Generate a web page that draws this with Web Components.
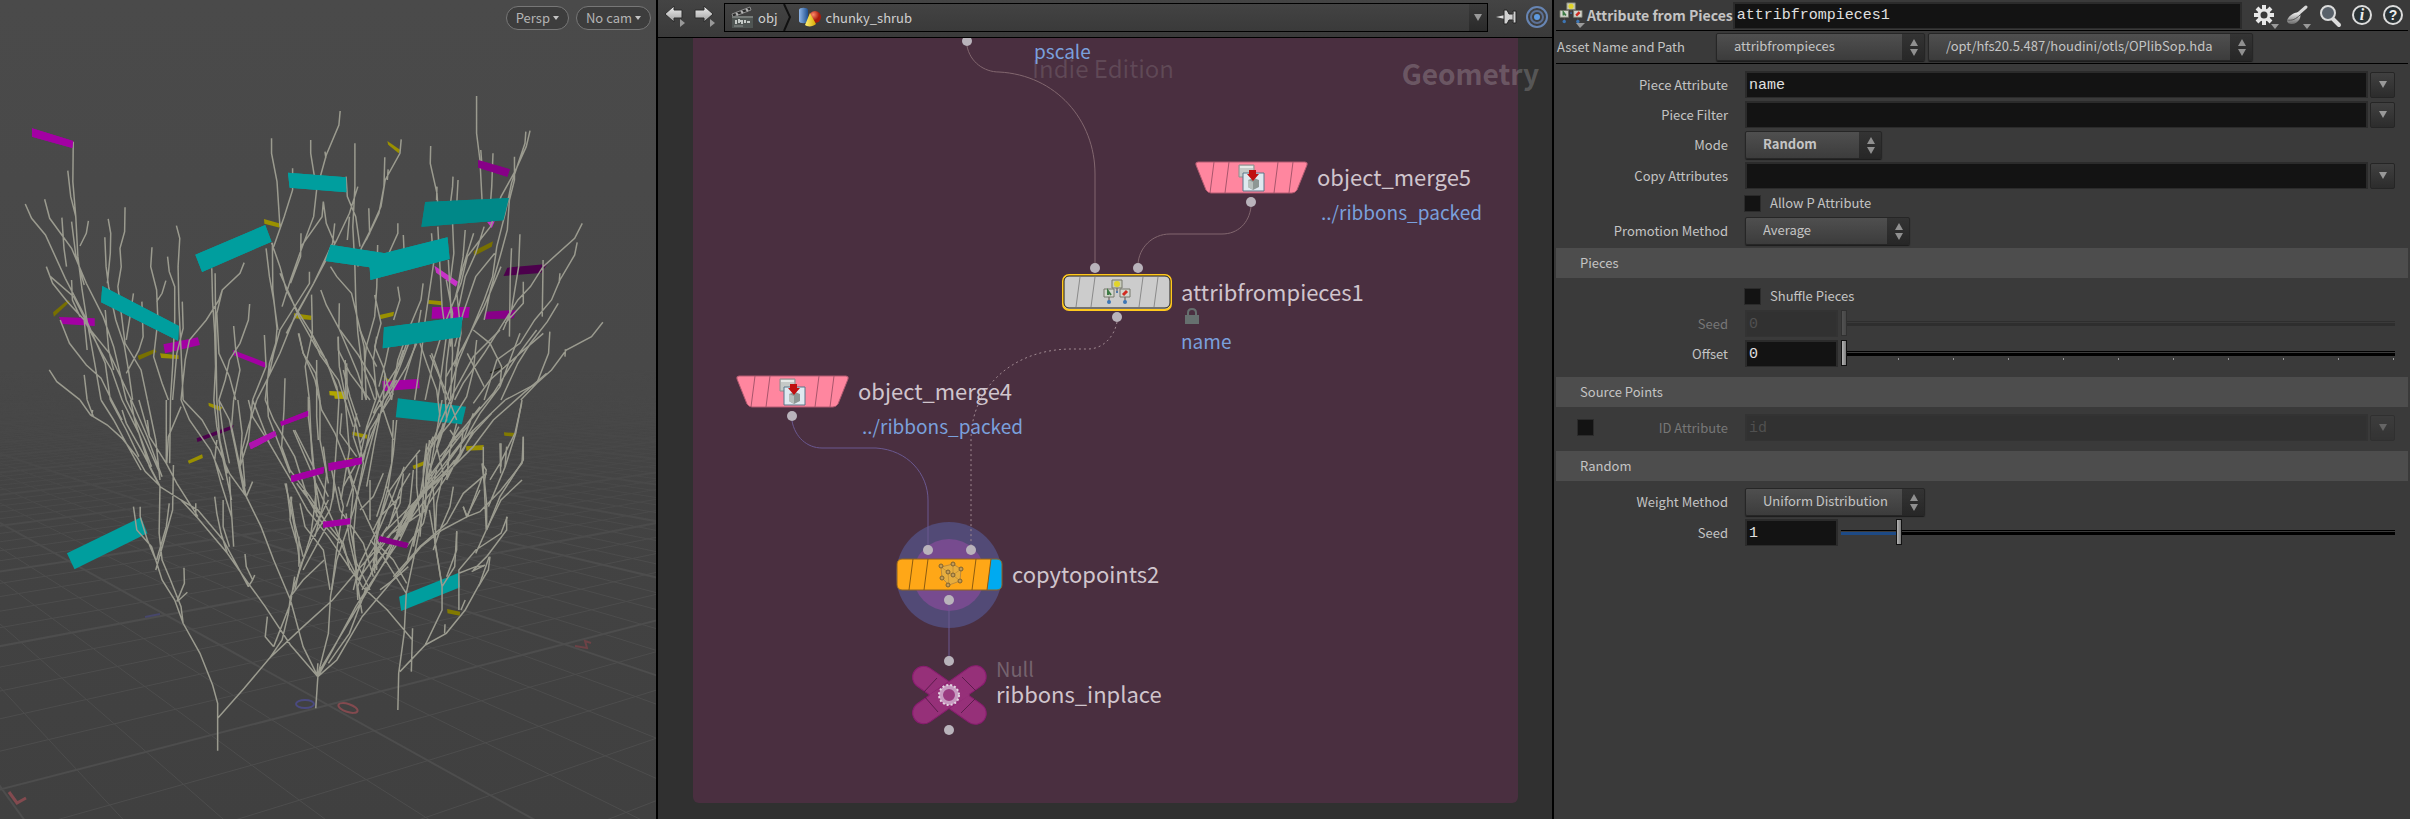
<!DOCTYPE html>
<html lang="en">
<head>
<meta charset="utf-8">
<title>chunky_shrub</title>
<style>
    html, body {
        height: 100%;
        margin: 0;
    }

    body {
        background-color: #3a3a3a;
        color: #c4c4c4;
        font-family: "Noto Sans CJK SC", "Noto Sans", sans-serif;
        font-size: 13px;
        overflow: hidden;
    }
</style>
</head>
<body>
<app-desktop>
    <scene-view slot="scene"></scene-view>
    <network-editor slot="network">
        <network-node kind="merge" name="object_merge5" note="../ribbons_packed" style="left: 537px; top: 123px"></network-node>
        <network-node kind="pieces" name="attribfrompieces1" note="name" locked style="left: 404px; top: 236px"></network-node>
        <network-node kind="merge" name="object_merge4" note="../ribbons_packed" style="left: 78px; top: 337px"></network-node>
        <network-node kind="copy" name="copytopoints2" style="left: 238px; top: 520px"></network-node>
        <network-node kind="null" name="ribbons_inplace" type="Null" style="left: 254px; top: 631px"></network-node>
    </network-editor>
    <param-pane slot="params">
        <param-group>
            <param-text label="Piece Attribute" value="name" menu></param-text>
            <param-text label="Piece Filter" value="" menu></param-text>
            <param-menu label="Mode" value="Random" width="137" bold></param-menu>
            <param-text label="Copy Attributes" value="" menu></param-text>
            <param-toggle label="Allow P Attribute"></param-toggle>
            <param-menu label="Promotion Method" value="Average" width="165"></param-menu>
        </param-group>
        <param-group heading="Pieces">
            <param-toggle label="Shuffle Pieces"></param-toggle>
            <param-slider label="Seed" value="0" disabled></param-slider>
            <param-slider label="Offset" value="0" ticks></param-slider>
        </param-group>
        <param-group heading="Source Points">
            <param-text label="ID Attribute" value="id" menu toggle disabled></param-text>
        </param-group>
        <param-group heading="Random">
            <param-menu label="Weight Method" value="Uniform Distribution" width="180"></param-menu>
            <param-slider label="Seed" value="1"></param-slider>
        </param-group>
    </param-pane>
</app-desktop>

<script>
const icons = {
    back: `<defs><linearGradient id="g" x2="0" y2="1"><stop stop-color="#f0f0f0"/><stop offset="1" stop-color="#a0a0a0"/></linearGradient></defs>
        <path d="M1 9L10 1V5H18V13H10V17Z" fill="url(#g)" stroke="#2c2c2c"/><path d="M16 14L21 18L16 22Z" fill="#999"/>`,
    forward: `<defs><linearGradient id="g" x2="0" y2="1"><stop stop-color="#f0f0f0"/><stop offset="1" stop-color="#a0a0a0"/></linearGradient></defs>
        <path d="M19 9L10 1V5H1V13H10V17Z" fill="url(#g)" stroke="#2c2c2c"/><path d="M16 14L21 18L16 22Z" fill="#999"/>`,
    clapper: `<path d="M1 8L19 1L20 4L2 11Z" fill="#2b2b2b" stroke="#8d8d8d"/><path d="M5 7L7 9M10 5L12 7M15 3L17 5" stroke="#b5b5b5" stroke-width="2"/>
        <path d="M1 10H22V22H1Z" fill="#4f5553"/><path d="M1 10H22V12H1Z" fill="#767b79"/><path d="M5 14V18M8 13V17M8 15H11V18M14 14V17M16 16H19" stroke="#c3c8c5" stroke-width="2"/><path d="M3 20H12" stroke="#8d918f"/>`,
    shapes: `<defs><linearGradient id="b"><stop stop-color="#8fb6e8"/><stop offset="1" stop-color="#20508f"/></linearGradient>
        <linearGradient id="y"><stop stop-color="#fff27a"/><stop offset="1" stop-color="#d8a800"/></linearGradient>
        <radialGradient id="r" cx=".35" cy=".3"><stop stop-color="#ff8a6a"/><stop offset="1" stop-color="#a81a0c"/></radialGradient></defs>
        <path d="M1 3C1 0 10 0 10 3V14C10 17 1 17 1 14Z" fill="url(#b)"/><circle cx="17" cy="10" r="6" fill="url(#r)"/>
        <path d="M12 6L18 17C15 20 9 20 7 18Z" fill="url(#y)"/>`,
    pin: `<path d="M0 9L9 7V11Z" fill="#ddd"/><path d="M8 2L11 2L13 6H17V3H20V15H17V12H13L11 16H8Z" fill="#d0d0d0" stroke="#222"/><path d="M17 4V14" stroke="#555"/>`,
    target: `<g fill="none" stroke="#6785b3"><circle cx="11" cy="11" r="10" stroke-width="2"/><circle cx="11" cy="11" r="6" stroke-width="2" stroke="#5c7196"/></g><circle cx="11" cy="11" r="3" fill="#5f9ae0"/>`,
    gear: `<g stroke="#e8e8e8" stroke-width="4"><path d="M11 1V6M11 16V21M1 11H6M16 11H21M4 4L7 7M15 15L18 18M4 18L7 15M15 7L18 4"/></g><circle cx="11" cy="11" r="5" fill="none" stroke="#e8e8e8" stroke-width="3"/><path d="M18 20H26L22 25Z" fill="#9a9a9a"/>`,
    brush: `<defs><linearGradient id="s" x2="0" y2="1"><stop stop-color="#f0f0f0"/><stop offset="1" stop-color="#6a6a6a"/></linearGradient></defs>
        <path d="M12 10L20 3" stroke="#d8d8d8" stroke-width="3" stroke-linecap="round"/><path d="M1 16C3 12 9 7 13 9C17 12 12 20 6 20C3 20 1 19 1 16Z" fill="url(#s)"/><path d="M1 16C6 17 10 15 14 11" fill="none" stroke="#555"/><path d="M17 20H25L21 25Z" fill="#9a9a9a"/>`,
    search: `<path d="M13 14L20 21" stroke="#ddd" stroke-width="4" stroke-linecap="round"/><circle cx="9" cy="9" r="7" fill="#59616a" stroke="#dcdcdc" stroke-width="2"/>`,
    info: `<circle cx="10" cy="10" r="9" fill="#2a3234" stroke="#ddd" stroke-width="2"/><text x="10" y="15" text-anchor="middle" font-family="Liberation Serif" font-size="16" font-weight="700" font-style="italic" fill="#eee">i</text>`,
    help: `<circle cx="10" cy="10" r="9" fill="#2a3234" stroke="#ddd" stroke-width="2"/><text x="10" y="15" text-anchor="middle" font-family="Liberation Sans" font-size="14" font-weight="700" fill="#eee">?</text>`,
    pieces: `<path d="M13 9V14M5 18V22M21 18V22" stroke="#5a4a4a"/>
        <path d="M8 1H18V9H8Z" fill="#c9ccb9" stroke="#77796c"/><circle cx="13" cy="5" r="3" fill="#e2d528"/>
        <path d="M0 10H10V18H0Z" fill="#d3d6ce" stroke="#77796c"/><path d="M4 16V12L7 16" fill="none" stroke="#3d7a44" stroke-width="2"/>
        <path d="M16 10H26V18H16Z" fill="#d3d6ce" stroke="#77796c"/><path d="M19 16L23 12" stroke="#d02a20" stroke-width="3"/>
        <circle cx="5" cy="23" r="2" fill="#3d76b5"/><circle cx="21" cy="23" r="2" fill="#3d76b5"/><circle cx="13" cy="13" r="1" fill="#3d76b5"/>`,
    merge: `<path d="M0 0H15V12H0Z" fill="#c5c9c7" stroke="#8b8f8d"/><path d="M1 1H14V3H1Z" fill="#e6e9e7"/>
        <path d="M4 8H25V26H4Z" fill="#dfe9f0" stroke="#5a7488"/><path d="M9 15L15 13L20 15V22L14 25L9 22Z" fill="#8d9794"/><path d="M9 15L14 17V25L9 22Z" fill="#b6bfbc"/>
        <path d="M10 5H17V9H20L14 16L8 9H10Z" fill="#c01010"/>`,
    points: `<path d="M2 5L14 2L22 7L21 19L10 23L3 16Z" fill="#e7ad3e" stroke="#bd8a3a"/><path d="M9 10L2 5M9 10L14 13L22 7M14 13V2M9 10L10 23M14 13L21 19" stroke="#c99437" fill="none"/>
        <g fill="#c39a55" stroke="#7d6230"><circle cx="2" cy="4" r="2"/><circle cx="14" cy="2" r="2"/><circle cx="22" cy="7" r="2"/><circle cx="9" cy="10" r="2"/><circle cx="14" cy="13" r="2"/><circle cx="3" cy="16" r="2"/><circle cx="21" cy="19" r="2"/><circle cx="9" cy="23" r="2"/></g>`
};

icons.asset = `<g transform="scale(.85)">${icons.pieces}</g><path d="M16 21H25L20 26Z" fill="#9a9a9a"/>`;

const icon = (name, width, height) =>
    `<svg width="${width}" height="${height}" viewBox="0 0 ${width} ${height}" fill="none" aria-hidden="true">${icons[name]}</svg>`;

class AppDesktop extends HTMLElement {

    constructor() {
        super();
        this.shadow = this.attachShadow({mode: 'open'});
        this.render();
    }

    render() {
        this.shadow.innerHTML =
        `
        <style>
            :host {
                background-color: #000;
                display: grid;
                gap: 2px;
                grid-template-columns: 656fr 894fr 856fr;
                height: 100vh;
            }

            ::slotted(*) {
                min-width: 0;
                overflow: hidden;
            }
        </style>
        <slot name="scene"></slot>
        <slot name="network"></slot>
        <slot name="params"></slot>
        `;
    }
}

customElements.define('app-desktop', AppDesktop);

// Upper crown of the shrub
const crown = `M60 612L75 655L108 705L155 835L200 945L250 1090L262 1200 M106 598L118 655L170 745L205 850L245 950L270 1040L300 1200
    M174 425L173 545L180 650L185 770L195 870L205 950L225 1090L240 1200 M161 512L168 590L180 650 M147 653L152 745L158 800
    M170 665L180 765L200 855 M210 663L205 700L190 738 M110 800L125 850L160 905L200 960L240 1055L265 1110L290 1200
    M120 830L175 890L215 990L260 1060L312 1200 M143 960L165 1030L205 1095L240 1135L265 1200 M117 1110L135 1145L190 1200 M200 1125L207 1200
    M249 712L252 800L258 860L275 960L295 1035L305 1110L315 1200 M257 657L263 700L262 760L255 850 M170 840L172 900L190 950
    M297 622L296 695L285 745L288 800L280 860L290 960L297 1030L335 1110L350 1200 M361 742L358 800L372 870L375 960L365 1070L385 1150L400 1200
    M398 770L402 815L415 860L415 960L410 1100L405 1200 M419 677L427 715L423 800L425 920L430 1050L435 1200 M394 842L385 880L372 905
    M433 905L435 985L420 1060L410 1200 M317 880L310 940L300 1020 M337 905L340 1010L330 1050L300 1120 M250 930L258 1050L270 1110 M200 960L207 1050
    M503 805L505 905L510 1000L512 1100L508 1200 M511 820L512 950L515 1200 M580 788L570 820L528 870L520 900L490 960L450 1020L440 1080L430 1200
    M593 912L590 960L570 1030L545 1080L535 1140L520 1200 M555 978L560 1050L570 1110L555 1200 M528 870L515 940L520 1060L545 1130L560 1200
    M645 415L645 460L658 545L665 680 M695 505L695 570L675 650L650 740 M738 420L738 460L752 570L745 650L718 740L690 840L670 920
    M808 333L805 375L775 465L752 570 M772 455L774 475 M645 728L665 800L680 870L705 930L740 1000L770 1070L800 1160L805 1200
    M632 745L640 830L650 900L660 990 M647 728L648 870L658 985L655 1030L640 1090L630 1200 M843 430L843 560L838 680L843 800L845 900L850 1000L860 1100L860 1200
    M768 605L765 650L715 740 M715 700L714 770L690 850 M768 605L775 670L795 730 M850 560L830 640L800 720L745 850L700 950L665 1060L630 1150L610 1200
    M795 670L790 730L745 850L680 1000 M953 418L950 460L915 540L905 620L880 690L858 745 M914 472L912 560L900 640L870 720 M922 508L920 540
    M876 625L878 700L858 745L850 800 M822 530L825 590L845 650L855 740 M830 650L825 720 M665 820L690 890L710 950L750 1040L775 1080L800 1170
    M762 870L775 915L805 985L830 1060L850 1120L870 1200 M740 884L742 1000L725 1100L735 1200 M735 815L735 850L665 990L650 1060L640 1120
    M710 1000L720 1060L750 1120L760 1200 M628 1005L632 1100L600 1200 M785 800L800 830L835 880L850 960L865 1040L870 1200 M803 1010L806 1100L822 1200
    M820 1080L822 1200 M806 910L805 985 M945 670L945 700L920 770 M897 735L895 860L890 950L870 1040L865 1110L890 1200 M958 705L960 760
    M1132 288L1132 400L1140 480L1145 600 M1023 438L1022 490L1038 580L1040 620 M1142 450L1145 500 M1038 560L1037 600
    M1076 530L1075 560L1070 610 M1088 540L1085 610 M1171 460L1168 560L1165 610
    M1259 392L1250 440L1225 510L1190 590L1165 680L1140 720L1110 770L1095 850L1060 960L1030 1080L1010 1200
    M1249 395L1247 430L1215 550L1200 640L1180 740L1170 830L1150 900L1120 990L1090 1080L1060 1200 M1222 470L1222 540L1210 600L1205 690L1190 760L1165 870L1150 960
    M1383 670L1365 715L1290 800L1260 860L1230 900L1190 980L1150 1060L1100 1150L1080 1200 M1371 727L1365 765L1330 840L1310 900L1270 960L1235 1030L1180 1080L1150 1200
    M1326 910L1300 965L1260 1030L1230 1090L1190 1200 M1290 780L1288 950 M1330 820L1328 850 M1235 703L1232 800L1215 930L1195 990 M1243 845L1243 910L1200 970
    M1215 745L1212 830L1210 1010 M1432 967L1405 1010L1345 1050L1310 1110L1275 1150L1237 1200 M1306 995L1303 1060L1275 1150L1200 1200 M1343 1048L1342 1070
    M1005 850L1000 900L970 990L945 1080L930 1200 M1040 680L1045 800L1050 920L1060 1010L1040 1200 M1065 780L1070 900L1075 1060L1070 1200
    M1105 690L1100 770L1085 880L1095 1000L1080 1100 M890 885L905 970L890 1040L910 1100L930 1200 M945 860L950 900L935 960 M1075 670L1078 760L1070 840
    M1025 700L1030 790L1010 960L1000 1070L985 1200 M1125 700L1100 800L1080 900 M1150 680L1130 760L1105 830L1090 920 M1190 800L1150 920L1100 1040L1060 1130
    M1175 760L1130 830L1100 940L1080 1040 M1060 840L1075 940L1070 1040 M980 1000L950 1100L930 1160 M1000 930L985 1040L960 1140 M930 1000L915 1090L900 1160
    M1110 1060L1130 1110L1150 1160 M1025 1060L1040 1110L1055 1180`;

// Stems and lower branches
const stems = `M517 1052L517 910L505 855L475 760L435 670L415 600L385 540L370 480L350 420L333 350L333 320
    M517 955L580 865L640 775L720 680L790 600L850 510L900 440L950 370L1000 280L1050 200L1100 120L1150 60L1200 0
    M435 670L430 620L405 540L385 480L378 400L380 260 M420 605L438 550L437 503 M425 600L445 577 M370 480L360 440L325 390L317 320
    M370 510L390 420L410 330L412 195 M372 480L395 380L402 310 M380 258L345 215L325 170L290 115L255 75L215 45L190 0 M220 30L218 50
    M380 258L340 160L300 70L290 30 M380 260L355 200L340 140L320 60L310 0 M380 260L430 300L470 355L540 460L590 550L630 620L690 735L755 830
    M430 300L470 330L530 420L590 560 M470 350L420 250L395 190L355 110L330 0 M465 310L465 350 M590 560L600 540L585 500L582 462 M540 460L525 400L515 340L510 290
    M545 440L530 380L530 300 M555 440L550 340L545 230 M755 830L720 740L690 600L650 480L620 380L585 290L570 200L575 100L565 0
    M585 290L545 220L520 150L480 60L435 0 M585 290L600 245 M550 350L525 250L510 180L515 120 M580 280L560 150L545 60L520 0 M570 200L590 120L600 0
    M750 925L755 830L760 800L780 700L785 590L800 480L840 330L870 180L900 40 M755 790L753 830 M755 830L790 750L845 620L880 550L950 420L1010 260L1020 120
    M755 830L800 780L860 650L920 560L1000 440L1050 390L1110 350L1140 335L1190 270L1240 190L1243 110 M780 790L830 700L860 600L870 560
    M650 740L630 710L635 650 M650 740L690 610L700 530 M640 775L670 720L685 640L690 590L720 540L770 480
    M945 930L947 820L960 700L965 580L990 430L1010 300L1030 150L1050 0 M950 815L1010 735L1050 630L1050 560L1035 440L1020 330
    M977 815L980 685 M980 720L920 630L860 560L820 460L790 360L750 250 M1010 735L1060 700L1105 630L1140 550L1162 470 M1056 700L1057 673 M1095 630L1105 600
    M1050 560L1080 500L1085 393 M1090 520L1130 500L1150 497 M1090 630L1090 510L1130 450L1190 400L1205 350 M1155 390L1150 250L1145 190
    M1155 390L1190 300L1240 240 M1155 390L1130 460 M1160 320L1200 200L1225 100L1240 0 M1190 130L1190 200 M1145 190L1155 210L1150 250
    M690 590L715 500L740 400L780 300 M710 500L710 410 M720 470L700 370L690 290 M690 350L680 250 M720 510L750 440L780 370 M600 540L605 525
    M395 190L395 0 M403 190L405 0 M430 20L400 110L396 190 M350 60L355 110 M1110 350L1140 250L1145 230 M1110 350L1100 320 M640 130L600 50L590 0
    M700 260L730 330L780 410L850 540 M700 90L740 190L780 290 M965 580L910 470L880 420 M850 600L845 500L830 420L822 340
    M240 0L270 60L300 130L335 210 M262 0L300 90L330 170 M290 0L330 100L360 200 M300 0L345 120L380 220 M312 0L350 110L385 230 M350 0L370 120L380 240
    M265 0L290 60 M207 0L222 50 M508 0L515 80L530 180L550 300 M515 0L522 120L540 220 M555 0L550 80L570 200 M520 0L530 100L545 190 M610 0L590 80L575 150L582 260
    M630 0L650 60L700 170L730 290 M600 0L640 130L700 260 M735 0L740 150L750 280 M760 0L760 120L780 250 M805 0L800 120L790 300 M820 0L830 150L810 300
    M430 0L450 60L500 150L530 240 M755 820L860 600L930 450L980 320L1040 200L1090 80 M860 570L900 480L1010 300L1080 180 M860 640L850 560L870 480L920 380
    M850 540L930 400L1000 340 M890 520L890 420L930 300L960 200`;

// Dense middle of the shrub
const thicket = `M115 10L130 70L165 150L185 240L225 310L260 400L300 520L360 650 M150 0L180 75L235 150L280 290 M235 20L235 60L270 130L330 210
    M240 0L295 75L340 150L370 240L400 330 M300 0L325 60L350 110 M350 20L340 90L350 200L320 290L300 380L250 470 M470 40L440 110L380 210L340 300L300 400L260 530
    M440 40L420 100L375 170L340 250 M375 130L370 210L345 330L320 470 M510 75L530 120L560 190L590 270 M480 40L500 100L530 180L540 260
    M570 20L560 100L555 190L560 270L510 360 M600 20L590 100L580 200L540 330L500 450 M650 30L640 120L620 200L570 280L520 340
    M720 0L640 80L580 190L540 280L500 380L480 500L420 620 M780 10L750 90L720 170L660 250L620 320L540 430L470 510L370 610L330 740
    M830 0L770 80L700 190L640 260L570 340 M860 130L790 190L700 270L640 350L560 430L490 490L420 600L340 720 M850 10L780 70L690 150L640 220
    M695 250L640 310L580 400L500 480L430 570L380 680 M720 170L725 110L690 40L640 0 M785 220L765 310L720 400L690 450 M790 320L790 390L720 500L680 600
    M670 350L670 420L680 520L680 600 M680 430L610 490L560 580L480 650L400 740 M610 530L620 560L660 480 M580 470L570 530L540 600L520 660
    M720 340L722 430 M740 350L735 410 M480 360L440 410L390 480L360 570L340 700 M500 340L490 420L490 500L480 620 M515 340L500 440L495 560
    M470 370L470 470L480 560L440 700 M430 430L420 520L380 600 M410 270L400 370L385 470L350 600L350 720 M400 270L395 400L370 500L350 560
    M260 100L262 200L290 290L310 400L290 510L280 620L290 730 M170 90L170 260L175 330 M145 200L145 260L155 340L165 450L170 560
    M75 145L72 240L65 350L90 420L150 500L200 580 M20 160L25 260L60 350L90 430 M100 300L130 370L165 450L180 540 M190 350L200 430L190 520L165 620
    M75 460L90 520L105 600L120 700 M95 500L90 570L110 640 M120 520L135 590L190 660L210 780 M170 470L160 560L150 630 M225 470L210 540L155 630L120 710L105 780
    M235 470L250 530L230 660L215 780 M370 430L340 500L300 540 M330 450L330 570 M260 400L280 480L270 590L290 700L330 780 M110 460L170 540L250 640L270 720
    M215 420L240 540L310 640L340 740 M360 650L400 690L440 760 M445 710L400 750L360 780 M550 280L530 350L550 430L530 520L525 640L545 760
    M510 400L520 480L525 600 M590 280L570 360L560 440 M640 250L610 330L560 400 M460 650L480 560L540 470L600 380L640 300 M350 600L300 700L280 780
    M590 605L590 660L560 740 M740 560L740 600L680 680L640 720 M635 725L675 705 M690 680L685 720L655 770 M245 250L240 310L290 380 M290 250L280 320L300 380
    M630 280L560 370L500 450 M660 230L600 310L540 380 M610 300L600 370L560 450 M570 300L590 330L540 400 M520 320L500 360L490 430 M450 430L420 480L390 580
    M340 600L360 560L420 500 M310 390L330 300L400 190 M300 340L350 240L410 150 M430 60L400 150L360 230 M250 120L270 200L300 290 M130 480L180 570L240 640
    M380 470L410 540L420 620 M460 420L450 520L410 610 M530 420L510 500L490 580L440 650`;

const teal = '#009e9e', violet = '#a300a3', plum = '#870087', mustard = '#9a9000';

const ribbonsTop = [
    [violet, '76,385 174,423 172,444 76,410'], [plum, '1136,480 1211,508 1205,530 1136,503'],
    [teal, '684,518 822,532 823,577 688,563'], ['#008888', '1010,606 1209,594 1196,661 1001,680'],
    [teal, '464,764 630,675 645,725 480,816'], [teal, '785,734 915,760 895,805 773,783'],
    [teal, '905,762 1063,712 1068,777 880,840 878,802'], [teal, '243,858 425,978 423,1022 240,907'],
    ['#009696', '912,982 1099,950 1093,1012 909,1045'], [violet, '140,951 225,955 225,978 148,972'],
    [violet, '388,1033 470,1012 475,1035 392,1060'], [violet, '553,1050 632,1088 630,1103 555,1066'],
    [violet, '1027,921 1116,921 1113,953 1025,956'], [plum, '1152,935 1226,930 1220,955 1150,958'],
    ['#4c004c', '1205,803 1300,792 1285,819 1196,828'], ['#c832c8', '1032,797 1088,845 1083,860 1036,818'],
    ['#c832c8', '1157,666 1175,664 1168,684'], [violet, '908,1143 995,1137 997,1165 910,1174'],
    [mustard, '920,423 951,450 947,460 922,434'], [mustard, '627,657 669,672 667,684 628,671'],
    ['#787000', '1125,753 1171,724 1168,740 1126,768'], ['#787000', '161,900 166,905 128,950 126,937'],
    [mustard, '698,940 741,947 739,960 699,955'], [mustard, '901,945 936,935 934,948 903,958'],
    [mustard, '1017,900 1050,904 1050,916 1017,911'], ['#787000', '327,1067 368,1047 372,1056 330,1080'],
    [mustard, '380,1060 424,1066 424,1077 383,1074'], ['#b0a600', '782,1173 822,1175 824,1197 795,1196 794,1187 783,1186'],
    [mustard, '910,1128 930,1143 920,1146'], ['#222218', '1163,1117 1205,1094 1205,1098 1165,1120']
];

const ribbonsBottom = [
    ['#009696', '945,-5 1107,20 1097,73 940,52'], [teal, '159,460 335,352 350,400 177,508'], [teal, '948,590 1090,518 1093,562 953,633'],
    [violet, '666,65 732,32 732,48 668,78'], ['#b012b0', '591,130 653,92 657,107 596,148'], [violet, '691,227 770,200 768,220 692,247'],
    [violet, '780,190 860,172 859,192 781,213'], [violet, '767,365 832,355 832,373 768,383'], [plum, '902,408 971,430 966,445 898,424'],
    ['#4c004c', '467,115 555,75 552,87 469,126'], [mustard, '495,8 528,22 523,33 496,18'], [mustard, '446,182 480,163 482,174 449,191'],
    [mustard, '837,95 873,104 871,116 837,105'], [mustard, '1107,139 1149,135 1147,150 1108,152'], ['#827a00', '1197,97 1225,99 1223,110 1198,107'],
    [mustard, '980,197 1010,182 1009,194 983,208'], [mustard, '815,176 840,173 830,180'], ['#827a00', '1062,627 1093,635 1092,647 1063,640']
];

const polygons = list => list.map(([fill, points]) => `<polygon fill="${fill}" points="${points}"/>`).join('');

// Ground plane point (u, v) to view coordinates
function project(u, v) {
    const w = 1 - 0.16 * u - 0.335 * v;
    return `${((328 - 326.3 * u + 106.4 * v) / w).toFixed(1)} ${((705 - 42.2 * u - 116 * v) / w).toFixed(1)}`;
}

function gridLines() {
    let minor = '';
    let major = '';
    for (let i = -60; i <= 60; i++) {
        const t = i / 5;
        const alongV = `M${project(t, -40)}L${project(t, (0.85 - 0.16 * t) / 0.335)}`;
        const alongU = `M${project(-40, t)}L${project((0.85 - 0.335 * t) / 0.16, t)}`;
        if (i % 5) {
            minor += alongV + alongU;
        } else {
            major += alongV + alongU;
        }
    }
    return {minor, major};
}

class SceneView extends HTMLElement {

    constructor() {
        super();
        this.shadow = this.attachShadow({mode: 'open'});
        this.render();
    }

    render() {
        const grid = gridLines();

        this.shadow.innerHTML =
        `
        <style>
            :host {
                background: linear-gradient(#4a4a4a, #484848 45%, #434343 60%, #404040);
                display: grid;
            }

            svg, .cameras {
                grid-area: 1 / 1;
            }

            svg {
                height: 100%;
                width: 100%;
            }

            .branches path {
                fill: none;
                stroke: #9b9b8f;
                stroke-width: 1.5px;
                vector-effect: non-scaling-stroke;
            }

            .cameras {
                align-items: center;
                align-self: start;
                display: flex;
                gap: 7px;
                justify-content: flex-end;
                padding: 6px 5px 0 0;
                z-index: 1;
            }

            button {
                align-items: center;
                background-color: #3d3d3d;
                border: 1px solid #777;
                border-radius: 12px;
                color: #b4b4b4;
                display: flex;
                font: inherit;
                gap: 3px;
                height: 24px;
                line-height: 20px;
                padding: 0 9px;
            }

            button::after {
                border: 3px solid transparent;
                border-bottom: 0;
                border-top: 4px solid #c4c4c4;
                content: "";
            }
        </style>
        <svg viewBox="0 0 656 819" preserveAspectRatio="xMinYMin slice">
            <defs>
                <linearGradient id="haze" gradientUnits="userSpaceOnUse" x1="0" x2="0" y1="370" y2="560">
                    <stop stop-color="#000"/><stop offset="1" stop-color="#fff"/>
                </linearGradient>
                <mask id="fade" maskUnits="userSpaceOnUse" x="0" y="370" width="656" height="449"><path fill="url(#haze)" d="M0 370H656V819H0Z"/></mask>
            </defs>
            <g mask="url(#fade)" fill="none" stroke="#4d4d4d">
                <path d="${grid.minor}"/>
                <path d="${grid.major}" stroke-width="2"/>
            </g>
            <g fill="none" stroke-width="2">
                <ellipse cx="305" cy="704" rx="9" ry="4" stroke="#4a4a80"/>
                <ellipse cx="348" cy="708" rx="10" ry="4" transform="rotate(18 348 708)" stroke="#834a4f"/>
                <path d="M9 792L17 803L26 798" stroke="#834a4f" stroke-width="3"/>
                <path d="M575 646L587 648L585 641L591 643" stroke="#6d4246"/>
                <path d="M145 617L160 614" stroke="#47476b"/>
            </g>
            <g transform="scale(.421 .3333)">${polygons(ribbonsTop)}</g>
            <g transform="translate(0 400) scale(.421 .3333)">${polygons(ribbonsBottom)}</g>
            <g class="branches">
                <path transform="scale(.421 .3333)" d="${crown}"/>
                <path transform="translate(0 400) scale(.421 .3333)" d="${stems}"/>
                <path transform="translate(260 330) scale(.3333)" d="${thicket}"/>
            </g>
            <g transform="scale(.421 .3333)">${polygons(ribbonsTop.slice(0, 9))}</g>
            <g transform="translate(0 400) scale(.421 .3333)">${polygons(ribbonsBottom.slice(3, 9))}</g>
        </svg>
        <div class="cameras">
            <button>Persp</button>
            <button>No cam</button>
        </div>
        `;
    }
}

customElements.define('scene-view', SceneView);

class NetworkEditor extends HTMLElement {

    constructor() {
        super();
        this.shadow = this.attachShadow({mode: 'open'});
        this.render();
    }

    render() {
        this.shadow.innerHTML =
        `
        <style>
            :host {
                display: flex;
                flex-direction: column;
            }

            button {
                align-items: center;
                background: none;
                border: 0;
                color: #d0d0d0;
                display: flex;
                font: inherit;
                padding: 0;
            }

            nav {
                align-items: center;
                background: linear-gradient(#444, #3a3a3a);
                border-bottom: 1px solid #000;
                box-sizing: border-box;
                display: flex;
                flex: none;
                gap: 8px;
                height: 38px;
                padding: 0 4px 3px 6px;
            }

            .path {
                align-items: stretch;
                background: linear-gradient(#434343, #3a3a3a);
                border: 1px solid #000;
                box-sizing: border-box;
                display: flex;
                flex: 1;
                height: 29px;
            }

            .path button {
                gap: 5px;
                padding-left: 6px;
            }

            .path .recent {
                background: linear-gradient(#3a3a3a, #2a2a2a);
                justify-content: center;
                margin-left: auto;
                padding: 0;
                width: 18px;
            }

            .canvas {
                background-color: #303030;
                flex: 1;
                overflow: hidden;
                position: relative;
            }

            .box {
                background-color: #4a2f40;
                border-radius: 0 0 6px 6px;
                inset: 0 34px 16px 35px;
                position: absolute;
            }

            .wires {
                height: 100%;
                inset: 0;
                position: absolute;
                width: 100%;
            }

            .label {
                color: #7aa0dc;
                font-size: 19px;
                left: 376px;
                line-height: 24px;
                position: absolute;
                top: 1px;
            }

            .edition, .context {
                color: rgba(255, 255, 255, 0.12);
                font-size: 24px;
                left: 374px;
                line-height: 32px;
                position: absolute;
                top: 14px;
            }

            .context {
                color: rgba(255, 255, 255, 0.2);
                font-size: 28px;
                font-weight: 700;
                left: auto;
                right: 13px;
                top: 19px;
            }
        </style>
        <nav>
            <button aria-label="Back">${icon('back', 22, 24)}</button>
            <button aria-label="Forward">${icon('forward', 22, 24)}</button>
            <div class="path">
                <button>${icon('clapper', 22, 22)}obj</button>
                <svg width="14" height="27" viewBox="0 0 14 27" fill="none"><path d="M6 0L12 13L6 27" stroke="#111" stroke-width="2"/></svg>
                <button>${icon('shapes', 23, 20)}chunky_shrub</button>
                <button class="recent" aria-label="Recent paths"><svg width="8" height="7"><path d="M0 0H8L4 7Z" fill="#999"/></svg></button>
            </div>
            <button aria-label="Pin">${icon('pin', 22, 18)}</button>
            <button aria-label="Follow selection">${icon('target', 22, 22)}</button>
        </nav>
        <div class="canvas">
            <div class="box"></div>
            <div class="edition">Indie Edition</div>
            <svg class="wires">
                <circle cx="291" cy="537" r="53" fill="#524a76"/>
                <circle cx="291" cy="537" r="36" fill="#774b8f"/>
                <g fill="none" stroke="#82676f" stroke-width="1">
                    <path d="M309 8C312 24 326 34 341 34C398 37 437 82 437 136V226"/>
                    <path d="M593 169C591 185 580 196 564 196H512C494 196 481 210 480 226"/>
                    <path d="M459 284C456 300 444 311 430 311H412C352 312 313 352 313 402V508" stroke="#a08a92" stroke-dasharray="2 3"/>
                    <path d="M134 383C137 399 149 410 164 410H218C250 412 270 436 270 462V508M291 567V619" stroke="#6a5890"/>
                </g>
                <circle cx="309" cy="3" r="5" fill="#b9b3bb"/>
            </svg>
            <div class="label">pscale</div>
            <div class="context">Geometry</div>
            <slot></slot>
        </div>
        `;
    }
}

customElements.define('network-editor', NetworkEditor);

const nodeShapes = {
    merge: {
        width: 113, height: 33, dots: [[56, 41]],
        body: `<path d="M3 1H110Q113 1 112 4L102 29Q100 32 97 32H16Q13 32 11 29L1 4Q0 1 3 1Z" fill="#ff869f" stroke="#b25a70"/>
            <path d="M19 1L15 32M34 1L30 32M83 1L79 32M98 1L94 32" stroke="#a8566c"/>
            <g transform="translate(44 4)">${icons.merge}</g>`
    },
    pieces: {
        width: 110, height: 36, dots: [[33, -6], [76, -6], [55, 43]],
        body: `<rect x="1" y="1" width="108" height="35" rx="6" fill="#ccc" stroke="#ffc81e" stroke-width="2"/>
            <rect x="2" y="2" width="106" height="32" rx="5" fill="#ccc" stroke="#1c1a18" stroke-width="1"/>
            <path d="M18 3L14 33M33 3L29 33M81 3L77 33M96 3L92 33" stroke="#8a8a8a"/>
            <g transform="translate(42 5)">${icons.pieces}</g>`
    },
    copy: {
        width: 107, height: 33, dots: [[32, -8], [75, -8], [53, 42]],
        body: `<path d="M95 1H101Q106 1 106 6V27Q106 32 101 32H91Z" fill="#00aaf0"/>
            <path d="M6 1H95L91 32H6Q1 32 1 27V6Q1 1 6 1Z" fill="#ffa717"/>
            <rect x="1" y="1" width="105" height="31" rx="5" stroke="#8d6322"/>
            <path d="M17 1L13 32M32 1L28 32M80 1L76 32M95 1L91 32" stroke="#8d5c10"/>
            <g transform="translate(43 4)">${icons.points}</g>`
    },
    null: {
        width: 75, height: 52, dots: [[37, -8], [37, 61]],
        body: `<g fill="#963079" stroke="#8a1c70"><rect x="-5" y="15" width="85" height="22" rx="11" transform="rotate(35 37 26)"/><rect x="-5" y="15" width="85" height="22" rx="11" transform="rotate(-35 37 26)"/></g>
            <path d="M17 26L37 13L58 26L37 39Z" fill="#963079"/>
            <path d="M11 24L25 9M50 8L64 22M12 27L26 43M49 44L63 30" stroke="#5c1c4c"/>
            <circle cx="37" cy="26" r="8" fill="#9a3a80" stroke="#c79ac0" stroke-width="4"/><circle cx="37" cy="26" r="10" stroke="#e3d5e2" stroke-width="2" stroke-dasharray="2 2"/>`
    }
};

class NetworkNode extends HTMLElement {

    constructor() {
        super();
        this.shadow = this.attachShadow({mode: 'open'});
    }

    connectedCallback() {
        const shape = nodeShapes[this.getAttribute('kind')];
        const dots = shape.dots.map(([x, y]) => `<circle cx="${x}" cy="${y}" r="5" fill="#b9b3bb"/>`).join('');
        const note = this.getAttribute('note');
        const type = this.getAttribute('type');

        this.shadow.innerHTML =
        `
        <style>
            :host {
                align-items: flex-start;
                display: flex;
                gap: 9px;
                position: absolute;
                white-space: nowrap;
            }

            svg {
                overflow: visible;
            }

            .texts {
                color: #d0c5cd;
                font-size: 22px;
                line-height: ${shape.height - 2}px;
            }

            :host([type]) .texts {
                line-height: 24px;
                margin-top: -12px;
            }

            .type {
                color: #75636e;
                font-size: 20px;
            }

            .note {
                color: #7aa0dc;
                font-size: 19px;
                line-height: 24px;
                padding: 8px 0 0 4px;
            }

            :host([locked]) .note {
                padding: 5px 0 0;
            }

            .lock {
                display: block;
                margin-left: 4px;
            }
        </style>
        <svg width="${shape.width}" height="${shape.height}" fill="none">${shape.body}${dots}</svg>
        <div class="texts">
            ${type ? `<div class="type">${type}</div>` : ''}
            <div>${this.getAttribute('name')}</div>
            ${this.hasAttribute('locked') ? '<svg class="lock" width="14" height="16" fill="none"><path d="M3 8V5Q3 1 7 1T11 5V8" stroke="#66706f" stroke-width="2"/><path d="M0 7H14V16H0Z" fill="#66706f"/></svg>' : ''}
            ${note ? `<div class="note">${note}</div>` : ''}
        </div>
        `;
    }
}

customElements.define('network-node', NetworkNode);

// Rules shared by the parameter controls
const controlStyle = `
    * {
        box-sizing: border-box;
    }

    :host {
        align-items: center;
        display: flex;
        margin-bottom: 3px;
    }

    .caption {
        flex: none;
        margin-right: 17px;
        text-align: right;
        width: 172px;
    }

    input, select, button {
        margin: 0;
    }

    input[type="text"] {
        background-color: #131313;
        border: 2px solid #2b2b2b;
        border-bottom-width: 1px;
        color: #e0e0e0;
        font: 15px "Liberation Mono", monospace;
        height: 27px;
        min-width: 0;
        padding: 0 2px;
    }

    input[type="checkbox"] {
        appearance: none;
        background-color: #131313;
        border: 1px solid #2b2b2b;
        height: 17px;
        width: 17px;
    }

    .menu {
        align-items: center;
        display: grid;
        flex: none;
        height: 28px;
    }

    .menu select, .menu svg {
        grid-area: 1 / 1;
    }

    .menu select {
        appearance: none;
        background: linear-gradient(90deg, transparent calc(100% - 22px), rgba(0, 0, 0, 0.35) 0), linear-gradient(#4f4f4f, #3c3c3c);
        border: 1px solid #262626;
        border-radius: 2px;
        box-shadow: 0 1px 1px #1c1c1c;
        color: #c4c4c4;
        font: inherit;
        height: 28px;
        line-height: 20px;
        padding: 0 24px 2px 17px;
        width: 100%;
    }

    .menu svg {
        justify-self: end;
        margin-right: 7px;
        pointer-events: none;
    }

    .drop {
        background: linear-gradient(#404040, #2c2c2c);
        border: 1px solid #252525;
        border-radius: 2px;
        flex: none;
        height: 26px;
        margin-left: 2px;
        padding: 0;
        width: 25px;
    }

    .drop svg {
        display: block;
        margin: auto;
    }`;

const menuArrows = '<svg width="8" height="17" aria-hidden="true"><path d="M0 7H8L4 0ZM0 10H8L4 17Z" fill="#909090"/></svg>';
const dropArrow = '<svg width="8" height="7" aria-hidden="true"><path d="M0 0H8L4 7Z" fill="#999"/></svg>';

class ParamText extends HTMLElement {

    constructor() {
        super();
        this.shadow = this.attachShadow({mode: 'open'});
    }

    connectedCallback() {
        const disabled = this.hasAttribute('disabled') ? 'disabled' : '';

        this.shadow.innerHTML =
        `
        <style>
            ${controlStyle}

            input[type="text"] {
                flex: 1;
            }

            input[type="checkbox"] {
                margin: 0 0 0 21px;
            }

            input[type="checkbox"] + .caption {
                width: 134px;
            }

            :host([disabled]) .caption {
                color: #777;
            }

            :host([disabled]) input[type="text"] {
                background-color: #313131;
                border-color: #333;
                color: #505050;
            }

            :host([disabled]) .drop {
                opacity: 0.45;
            }
        </style>
        ${this.hasAttribute('toggle') ? '<input type="checkbox" aria-label="Enable">' : ''}
        <label class="caption" for="field">${this.getAttribute('label')}</label>
        <input id="field" type="text" value="${this.getAttribute('value')}" ${disabled}>
        <button class="drop" aria-label="Choose" ${disabled}>${dropArrow}</button>
        `;
    }
}

customElements.define('param-text', ParamText);

class ParamMenu extends HTMLElement {

    constructor() {
        super();
        this.shadow = this.attachShadow({mode: 'open'});
    }

    connectedCallback() {
        this.shadow.innerHTML =
        `
        <style>
            ${controlStyle}

            :host([bold]) select {
                font-weight: 700;
            }
        </style>
        <label class="caption" for="menu">${this.getAttribute('label')}</label>
        <span class="menu" style="width: ${this.getAttribute('width')}px">
            <select id="menu"><option>${this.getAttribute('value')}</option></select>
            ${menuArrows}
        </span>
        `;
    }
}

customElements.define('param-menu', ParamMenu);

class ParamToggle extends HTMLElement {

    constructor() {
        super();
        this.shadow = this.attachShadow({mode: 'open'});
    }

    connectedCallback() {
        this.shadow.innerHTML =
        `
        <style>
            ${controlStyle}

            :host {
                gap: 9px;
                height: 22px;
                padding-left: 188px;
            }
        </style>
        <input id="toggle" type="checkbox">
        <label for="toggle">${this.getAttribute('label')}</label>
        `;
    }
}

customElements.define('param-toggle', ParamToggle);

class ParamSlider extends HTMLElement {

    constructor() {
        super();
        this.shadow = this.attachShadow({mode: 'open'});
    }

    connectedCallback() {
        const label = this.getAttribute('label');
        const value = this.getAttribute('value');
        const disabled = this.hasAttribute('disabled') ? 'disabled' : '';

        this.shadow.innerHTML =
        `
        <style>
            ${controlStyle}

            input[type="text"] {
                flex: none;
                width: 93px;
            }

            input[type="range"] {
                appearance: none;
                background: none;
                flex: 1;
                height: 27px;
                margin-left: 3px;
                min-width: 0;
            }

            input[type="range"]::-webkit-slider-runnable-track {
                background:
                    linear-gradient(90deg, #1d4a86 ${value * 10}%, transparent 0) 0 2px / 100% 3px no-repeat,
                    linear-gradient(#000 1px, #3c3c3c 1px 2px, #000 2px);
                height: 5px;
            }

            input[type="range"]::-webkit-slider-thumb {
                appearance: none;
                background: linear-gradient(90deg, #b4b4b4, #7c7c7c);
                border: 1px solid #111;
                height: 26px;
                margin-top: -11px;
                width: 6px;
            }

            :host([ticks]) input[type="range"] {
                background: repeating-linear-gradient(90deg, transparent 0 54px, #999 54px 55px) 3px 18px / 100% 2px no-repeat;
            }

            :host([disabled]) .caption {
                color: #777;
            }

            :host([disabled]) input[type="text"] {
                background-color: #313131;
                border-color: #333;
                color: #505050;
            }

            :host([disabled]) input[type="range"] {
                opacity: 0.2;
            }
        </style>
        <label class="caption" for="number">${label}</label>
        <input id="number" type="text" value="${value}" ${disabled}>
        <input type="range" min="0" max="10" value="${value}" aria-label="${label}" ${disabled}>
        `;
    }
}

customElements.define('param-slider', ParamSlider);

class ParamGroup extends HTMLElement {

    constructor() {
        super();
        this.shadow = this.attachShadow({mode: 'open'});
    }

    connectedCallback() {
        const heading = this.getAttribute('heading');

        this.shadow.innerHTML =
        `
        <style>
            :host {
                display: block;
            }

            h2 {
                background-color: #4d4d4d;
                font-size: 13px;
                font-weight: 400;
                line-height: 30px;
                margin: 0;
                padding-left: 24px;
            }

            .rows {
                padding: 7px 13px 7px 0;
            }

            :host(:not([heading])) .rows {
                padding-bottom: 0;
            }
        </style>
        ${heading ? `<h2>${heading}</h2>` : ''}
        <div class="rows"><slot></slot></div>
        `;
    }
}

customElements.define('param-group', ParamGroup);

class ParamPane extends HTMLElement {

    constructor() {
        super();
        this.shadow = this.attachShadow({mode: 'open'});
        this.render();
    }

    render() {
        this.shadow.innerHTML =
        `
        <style>
            ${controlStyle}

            :host {
                background-color: #3a3a3a;
                display: block;
                line-height: 20px;
                margin: 0;
                padding: 0 2px;
            }

            header, .asset {
                align-items: center;
                border-bottom: 1px solid #000;
                display: flex;
            }

            header {
                gap: 11px;
                height: 31px;
                padding: 0 5px 0 4px;
            }

            header > svg {
                margin-right: -8px;
            }

            h1 {
                font-size: 14px;
                margin: 0 -11px 0 0;
                white-space: nowrap;
            }

            header input[type="text"] {
                flex: 1;
            }

            header button {
                background: none;
                border: 0;
                display: flex;
                padding: 0;
            }

            header svg {
                flex: none;
                overflow: visible;
            }

            .asset {
                gap: 3px;
                height: 33px;
            }

            .asset label {
                padding-left: 1px;
                width: 157px;
            }
        </style>
        <header>
            ${icon('asset', 24, 26)}
            <h1><label for="name">Attribute from Pieces</label></h1>
            <input id="name" type="text" value="attribfrompieces1">
            <button aria-label="Options">${icon('gear', 22, 22)}</button>
            <button aria-label="Presets">${icon('brush', 22, 22)}</button>
            <button aria-label="Search">${icon('search', 22, 22)}</button>
            <button aria-label="Info">${icon('info', 20, 20)}</button>
            <button aria-label="Help">${icon('help', 20, 20)}</button>
        </header>
        <div class="asset">
            <label for="asset">Asset Name and Path</label>
            <span class="menu" style="width: 209px">
                <select id="asset"><option>attribfrompieces</option></select>
                ${menuArrows}
            </span>
            <span class="menu" style="width: 325px">
                <select aria-label="Library path"><option>/opt/hfs20.5.487/houdini/otls/OPlibSop.hda</option></select>
                ${menuArrows}
            </span>
        </div>
        <slot></slot>
        `;
    }
}

customElements.define('param-pane', ParamPane);
</script>
</body>
</html>
